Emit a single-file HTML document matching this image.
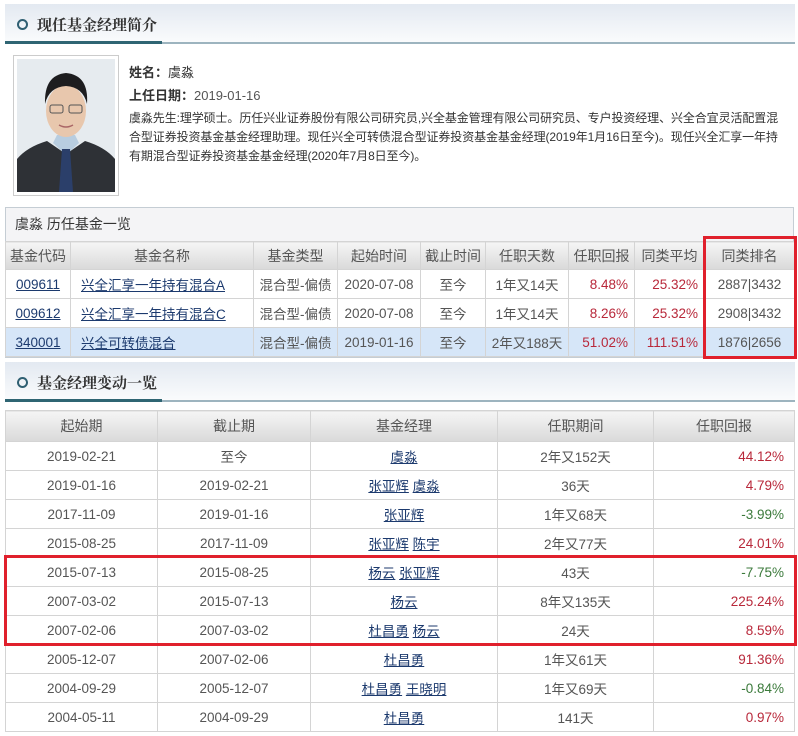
<!DOCTYPE html>
<html><head><meta charset="utf-8">
<style>
*{margin:0;padding:0;box-sizing:border-box}
body{width:798px;height:736px;background:#fff;position:relative;overflow:hidden;font-family:"Liberation Sans","Noto Sans CJK SC",sans-serif;color:#444}
.abs{position:absolute}
.hdr{position:absolute;left:5px;width:790px;height:40px;background:linear-gradient(#e3e9f1,#fbfcfd);}
.hdr .ul{position:absolute;left:0;bottom:0;width:790px;height:2px;background:#9db4bf}
.hdr .ul2{position:absolute;left:0;bottom:0;width:157px;height:3px;background:#2f6573}
.hdr .c{position:absolute;left:12px;top:15px;width:11px;height:11px;border:2px solid #2f5f72;border-radius:50%}
.hdr .t{position:absolute;left:32px;top:10px;font-size:15px;font-weight:bold;color:#333;font-family:"Noto Serif CJK SC","Noto Sans CJK SC",serif}
table{position:absolute;border-collapse:collapse;table-layout:fixed;font-size:13.5px}
td,th{border:1px solid #d4d4d4;text-align:center;color:#555;font-weight:normal;white-space:nowrap;overflow:hidden}
th{background:linear-gradient(#f5f5f5,#d9d9d9);color:#555;font-size:14px}
a{color:#1c3a6e;text-decoration:underline}
.r{color:#b8283a}.g{color:#3b7a3b}
.red{position:absolute;border:3px solid #e0202c}
</style></head><body>
<div class="hdr" style="top:4px"><div class="ul"></div><div class="ul2"></div><div class="c"></div><div class="t">现任基金经理简介</div></div>

<div class="abs" style="left:13px;top:55px;width:106px;height:141px;border:1px solid #ccc;background:#fff;padding:3px">
<svg width="98" height="133" viewBox="0 0 98 133">
<rect width="98" height="133" fill="#e6ebef"/>
<path d="M0 133 L0 100 Q10 88 30 82 L49 95 L68 82 Q88 88 98 100 L98 133Z" fill="#2e3136"/>
<path d="M36 84 L49 96 L62 84 L58 76 L40 76Z" fill="#b8cde0"/>
<path d="M45 90 L53 90 L56 133 L42 133Z" fill="#2b3f6a"/>
<ellipse cx="49" cy="52" rx="20" ry="26" fill="#e8c7ad"/>
<path d="M28 45 Q27 16 49 14 Q72 16 70 45 Q66 28 49 27 Q32 28 28 45Z" fill="#1d1d1f"/>
<rect x="33" y="46" width="13" height="8" rx="2" fill="none" stroke="#555" stroke-width="1"/>
<rect x="52" y="46" width="13" height="8" rx="2" fill="none" stroke="#555" stroke-width="1"/>
<path d="M42 66 Q49 70 56 66" stroke="#a66" stroke-width="1.5" fill="none"/>
</svg></div>

<div class="abs" style="left:129px;top:62px;font-size:13px;color:#333"><b>姓名：</b>虞淼</div>
<div class="abs" style="left:129px;top:85px;font-size:13px;color:#333"><b>上任日期：</b><span style="color:#555">2019-01-16</span></div>
<div class="abs" style="left:129px;top:109px;font-size:12px;letter-spacing:-0.1px;line-height:19px;color:#333;white-space:nowrap">虞淼先生:理学硕士。历任兴业证券股份有限公司研究员,兴全基金管理有限公司研究员、专户投资经理、兴全合宜灵活配置混<br>合型证券投资基金基金经理助理。现任兴全可转债混合型证券投资基金基金经理(2019年1月16日至今)。现任兴全汇享一年持<br>有期混合型证券投资基金基金经理(2020年7月8日至今)。</div>

<div class="abs" style="left:5px;top:207px;width:789px;height:151px;border:1px solid #c5cdd4;background:#f4f4f6"></div>
<div class="abs" style="left:15px;top:214px;font-size:14px;color:#333">虞淼 历任基金一览</div>
<table style="left:5px;top:241px;width:789px">
<colgroup><col style="width:65px"><col style="width:183px"><col style="width:84px"><col style="width:83px"><col style="width:65px"><col style="width:83px"><col style="width:66px"><col style="width:70px"><col style="width:90px"></colgroup>
<tr style="height:28px"><th>基金代码</th><th>基金名称</th><th>基金类型</th><th>起始时间</th><th>截止时间</th><th>任职天数</th><th>任职回报</th><th>同类平均</th><th>同类排名</th></tr>
<tr style="height:29px;background:#fff"><td><a>009611</a></td><td style="text-align:left;padding-left:10px"><a>兴全汇享一年持有混合A</a></td><td>混合型-偏债</td><td>2020-07-08</td><td>至今</td><td>1年又14天</td><td class="r" style="text-align:right;padding-right:6px">8.48%</td><td class="r" style="text-align:right;padding-right:6px">25.32%</td><td>2887|3432</td></tr>
<tr style="height:29px;background:#fff"><td><a>009612</a></td><td style="text-align:left;padding-left:10px"><a>兴全汇享一年持有混合C</a></td><td>混合型-偏债</td><td>2020-07-08</td><td>至今</td><td>1年又14天</td><td class="r" style="text-align:right;padding-right:6px">8.26%</td><td class="r" style="text-align:right;padding-right:6px">25.32%</td><td>2908|3432</td></tr>
<tr style="height:29px;background:#d6e6f8"><td><a>340001</a></td><td style="text-align:left;padding-left:10px"><a>兴全可转债混合</a></td><td>混合型-偏债</td><td>2019-01-16</td><td>至今</td><td>2年又188天</td><td class="r" style="text-align:right;padding-right:6px">51.02%</td><td class="r" style="text-align:right;padding-right:6px">111.51%</td><td>1876|2656</td></tr>
</table>
<div class="red" style="left:703px;top:236px;width:94px;height:123px"></div>

<div class="hdr" style="top:362px"><div class="ul"></div><div class="ul2"></div><div class="c"></div><div class="t">基金经理变动一览</div></div>

<table style="left:5px;top:410px;width:789px">
<colgroup><col style="width:152px"><col style="width:153px"><col style="width:187px"><col style="width:156px"><col style="width:141px"></colgroup>
<tr style="height:31px"><th>起始期</th><th>截止期</th><th>基金经理</th><th>任职期间</th><th>任职回报</th></tr>
<tr style="height:29px"><td>2019-02-21</td><td>至今</td><td><a>虞淼</a></td><td>2年又152天</td><td class="r" style="text-align:right;padding-right:10px">44.12%</td></tr>
<tr style="height:29px"><td>2019-01-16</td><td>2019-02-21</td><td><a>张亚辉</a> <a>虞淼</a></td><td>36天</td><td class="r" style="text-align:right;padding-right:10px">4.79%</td></tr>
<tr style="height:29px"><td>2017-11-09</td><td>2019-01-16</td><td><a>张亚辉</a></td><td>1年又68天</td><td class="g" style="text-align:right;padding-right:10px">-3.99%</td></tr>
<tr style="height:29px"><td>2015-08-25</td><td>2017-11-09</td><td><a>张亚辉</a> <a>陈宇</a></td><td>2年又77天</td><td class="r" style="text-align:right;padding-right:10px">24.01%</td></tr>
<tr style="height:29px"><td>2015-07-13</td><td>2015-08-25</td><td><a>杨云</a> <a>张亚辉</a></td><td>43天</td><td class="g" style="text-align:right;padding-right:10px">-7.75%</td></tr>
<tr style="height:29px"><td>2007-03-02</td><td>2015-07-13</td><td><a>杨云</a></td><td>8年又135天</td><td class="r" style="text-align:right;padding-right:10px">225.24%</td></tr>
<tr style="height:29px"><td>2007-02-06</td><td>2007-03-02</td><td><a>杜昌勇</a> <a>杨云</a></td><td>24天</td><td class="r" style="text-align:right;padding-right:10px">8.59%</td></tr>
<tr style="height:29px"><td>2005-12-07</td><td>2007-02-06</td><td><a>杜昌勇</a></td><td>1年又61天</td><td class="r" style="text-align:right;padding-right:10px">91.36%</td></tr>
<tr style="height:29px"><td>2004-09-29</td><td>2005-12-07</td><td><a>杜昌勇</a> <a>王晓明</a></td><td>1年又69天</td><td class="g" style="text-align:right;padding-right:10px">-0.84%</td></tr>
<tr style="height:29px"><td>2004-05-11</td><td>2004-09-29</td><td><a>杜昌勇</a></td><td>141天</td><td class="r" style="text-align:right;padding-right:10px">0.97%</td></tr>
</table>
<div class="red" style="left:4px;top:555px;width:793px;height:91px"></div>
</body></html>
